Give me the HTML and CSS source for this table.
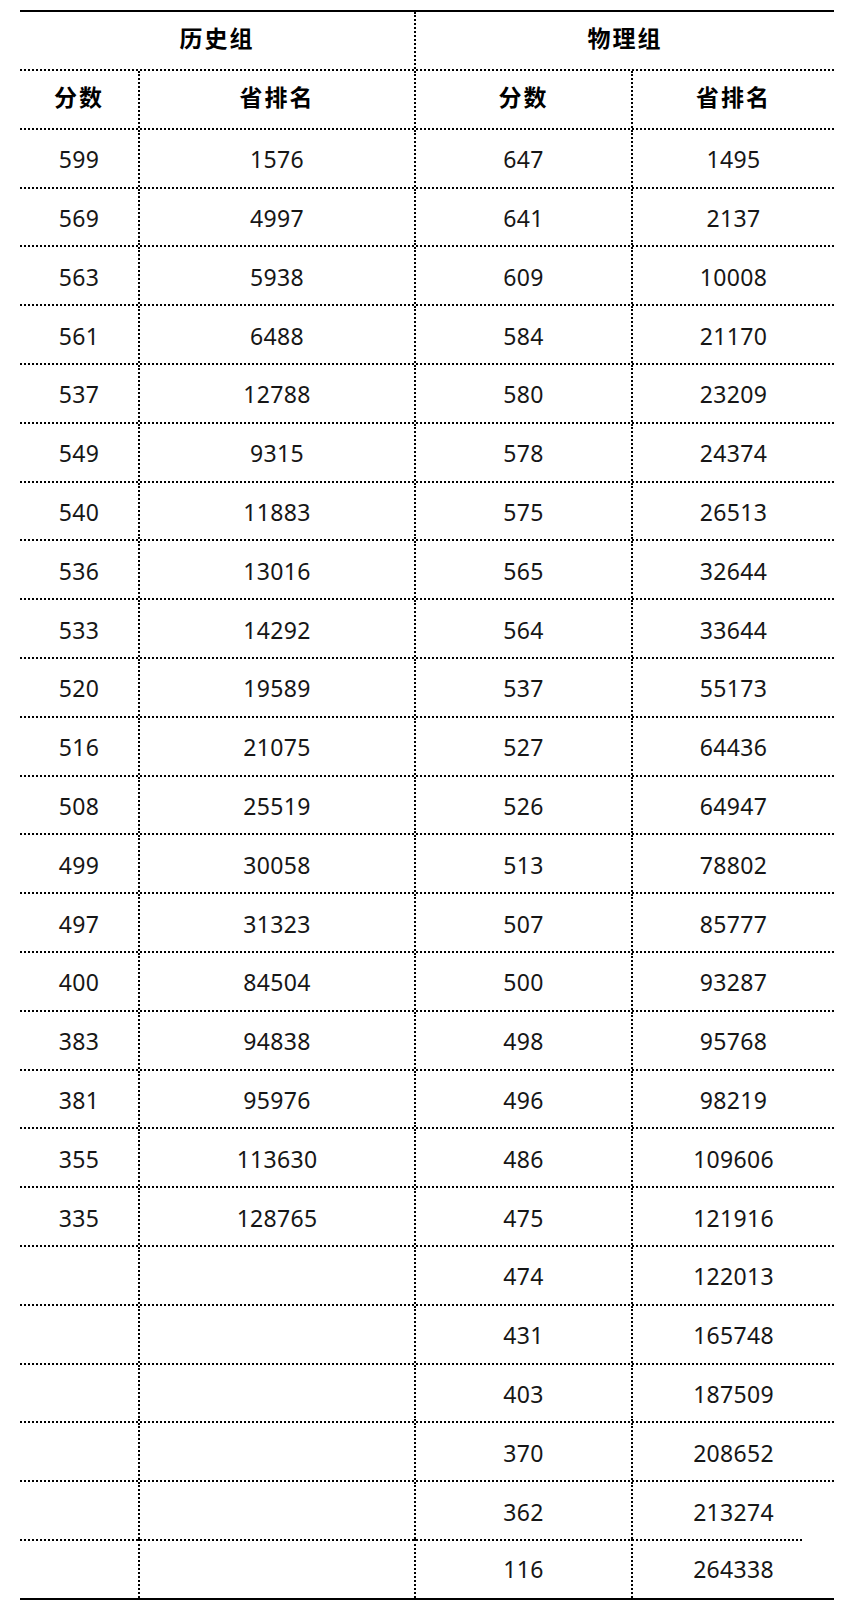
FILE: index.html
```html
<!DOCTYPE html>
<html lang="zh-CN">
<head>
<meta charset="utf-8">
<title>分数与省排名</title>
<link rel="stylesheet" href="styles.css">
</head>
<body>
<div class="table">
  <div class="group">
    <div class="gcell">历史组</div>
    <div class="gcell gright">物理组</div>
  </div>
  <div class="row head">
    <div class="c">分数</div><div class="c">省排名</div><div class="c">分数</div><div class="c">省排名</div>
  </div>
  <div class="row"><div class="c">599</div><div class="c">1576</div><div class="c">647</div><div class="c">1495</div></div>
  <div class="row"><div class="c">569</div><div class="c">4997</div><div class="c">641</div><div class="c">2137</div></div>
  <div class="row"><div class="c">563</div><div class="c">5938</div><div class="c">609</div><div class="c">10008</div></div>
  <div class="row"><div class="c">561</div><div class="c">6488</div><div class="c">584</div><div class="c">21170</div></div>
  <div class="row"><div class="c">537</div><div class="c">12788</div><div class="c">580</div><div class="c">23209</div></div>
  <div class="row"><div class="c">549</div><div class="c">9315</div><div class="c">578</div><div class="c">24374</div></div>
  <div class="row"><div class="c">540</div><div class="c">11883</div><div class="c">575</div><div class="c">26513</div></div>
  <div class="row"><div class="c">536</div><div class="c">13016</div><div class="c">565</div><div class="c">32644</div></div>
  <div class="row"><div class="c">533</div><div class="c">14292</div><div class="c">564</div><div class="c">33644</div></div>
  <div class="row"><div class="c">520</div><div class="c">19589</div><div class="c">537</div><div class="c">55173</div></div>
  <div class="row"><div class="c">516</div><div class="c">21075</div><div class="c">527</div><div class="c">64436</div></div>
  <div class="row"><div class="c">508</div><div class="c">25519</div><div class="c">526</div><div class="c">64947</div></div>
  <div class="row"><div class="c">499</div><div class="c">30058</div><div class="c">513</div><div class="c">78802</div></div>
  <div class="row"><div class="c">497</div><div class="c">31323</div><div class="c">507</div><div class="c">85777</div></div>
  <div class="row"><div class="c">400</div><div class="c">84504</div><div class="c">500</div><div class="c">93287</div></div>
  <div class="row"><div class="c">383</div><div class="c">94838</div><div class="c">498</div><div class="c">95768</div></div>
  <div class="row"><div class="c">381</div><div class="c">95976</div><div class="c">496</div><div class="c">98219</div></div>
  <div class="row"><div class="c">355</div><div class="c">113630</div><div class="c">486</div><div class="c">109606</div></div>
  <div class="row"><div class="c">335</div><div class="c">128765</div><div class="c">475</div><div class="c">121916</div></div>
  <div class="row"><div class="c"></div><div class="c"></div><div class="c">474</div><div class="c">122013</div></div>
  <div class="row"><div class="c"></div><div class="c"></div><div class="c">431</div><div class="c">165748</div></div>
  <div class="row"><div class="c"></div><div class="c"></div><div class="c">403</div><div class="c">187509</div></div>
  <div class="row"><div class="c"></div><div class="c"></div><div class="c">370</div><div class="c">208652</div></div>
  <div class="row"><div class="c"></div><div class="c"></div><div class="c">362</div><div class="c">213274</div></div>
  <div class="row short"><div class="c"></div><div class="c"></div><div class="c">116</div><div class="c">264338</div></div>
</div>
</body>
</html>
```

FILE: styles.css
```css
html, body {
  margin: 0;
  padding: 0;
  background: #ffffff;
}

body {
  padding: 10px 0 0 20px;
  font-family: "Noto Sans", "Open Sans", "Noto Sans CJK SC", sans-serif;
  color: #161616;
}

.table {
  width: 814px;
  border-top: 2px solid #000;
  border-bottom: 2px solid #000;
}

.group {
  display: grid;
  grid-template-columns: 394px 420px;
  height: 57px;
}

.gcell {
  display: flex;
  align-items: center;
  justify-content: center;
  font-family: "Noto Sans CJK SC", sans-serif;
  font-weight: 700;
  font-size: 23px;
  letter-spacing: 2px;
  color: #000;
  padding-bottom: 8px;
  box-sizing: border-box;
}

.gright {
  border-left: 2px dotted #000;
}

.row {
  display: grid;
  grid-template-columns: 118px 276px 217px 203px;
  height: 58.8px;
  box-sizing: border-box;
  border-top: 2px dotted #000;
}

.c {
  display: flex;
  align-items: center;
  justify-content: center;
  font-size: 23px;
  letter-spacing: 0.3px;
  padding-top: 2px;
}

.c + .c {
  border-left: 2px dotted #000;
}

.head .c {
  font-family: "Noto Sans CJK SC", sans-serif;
  font-weight: 700;
  font-size: 23px;
  letter-spacing: 2px;
  color: #000;
  padding-top: 0;
  padding-bottom: 6px;
}

.row.short {
  border-top: none;
  background-image: repeating-linear-gradient(to right, #000 0 2px, transparent 2px 4px);
  background-size: 782px 2px;
  background-repeat: no-repeat;
  background-position: 0 0;
}
```
